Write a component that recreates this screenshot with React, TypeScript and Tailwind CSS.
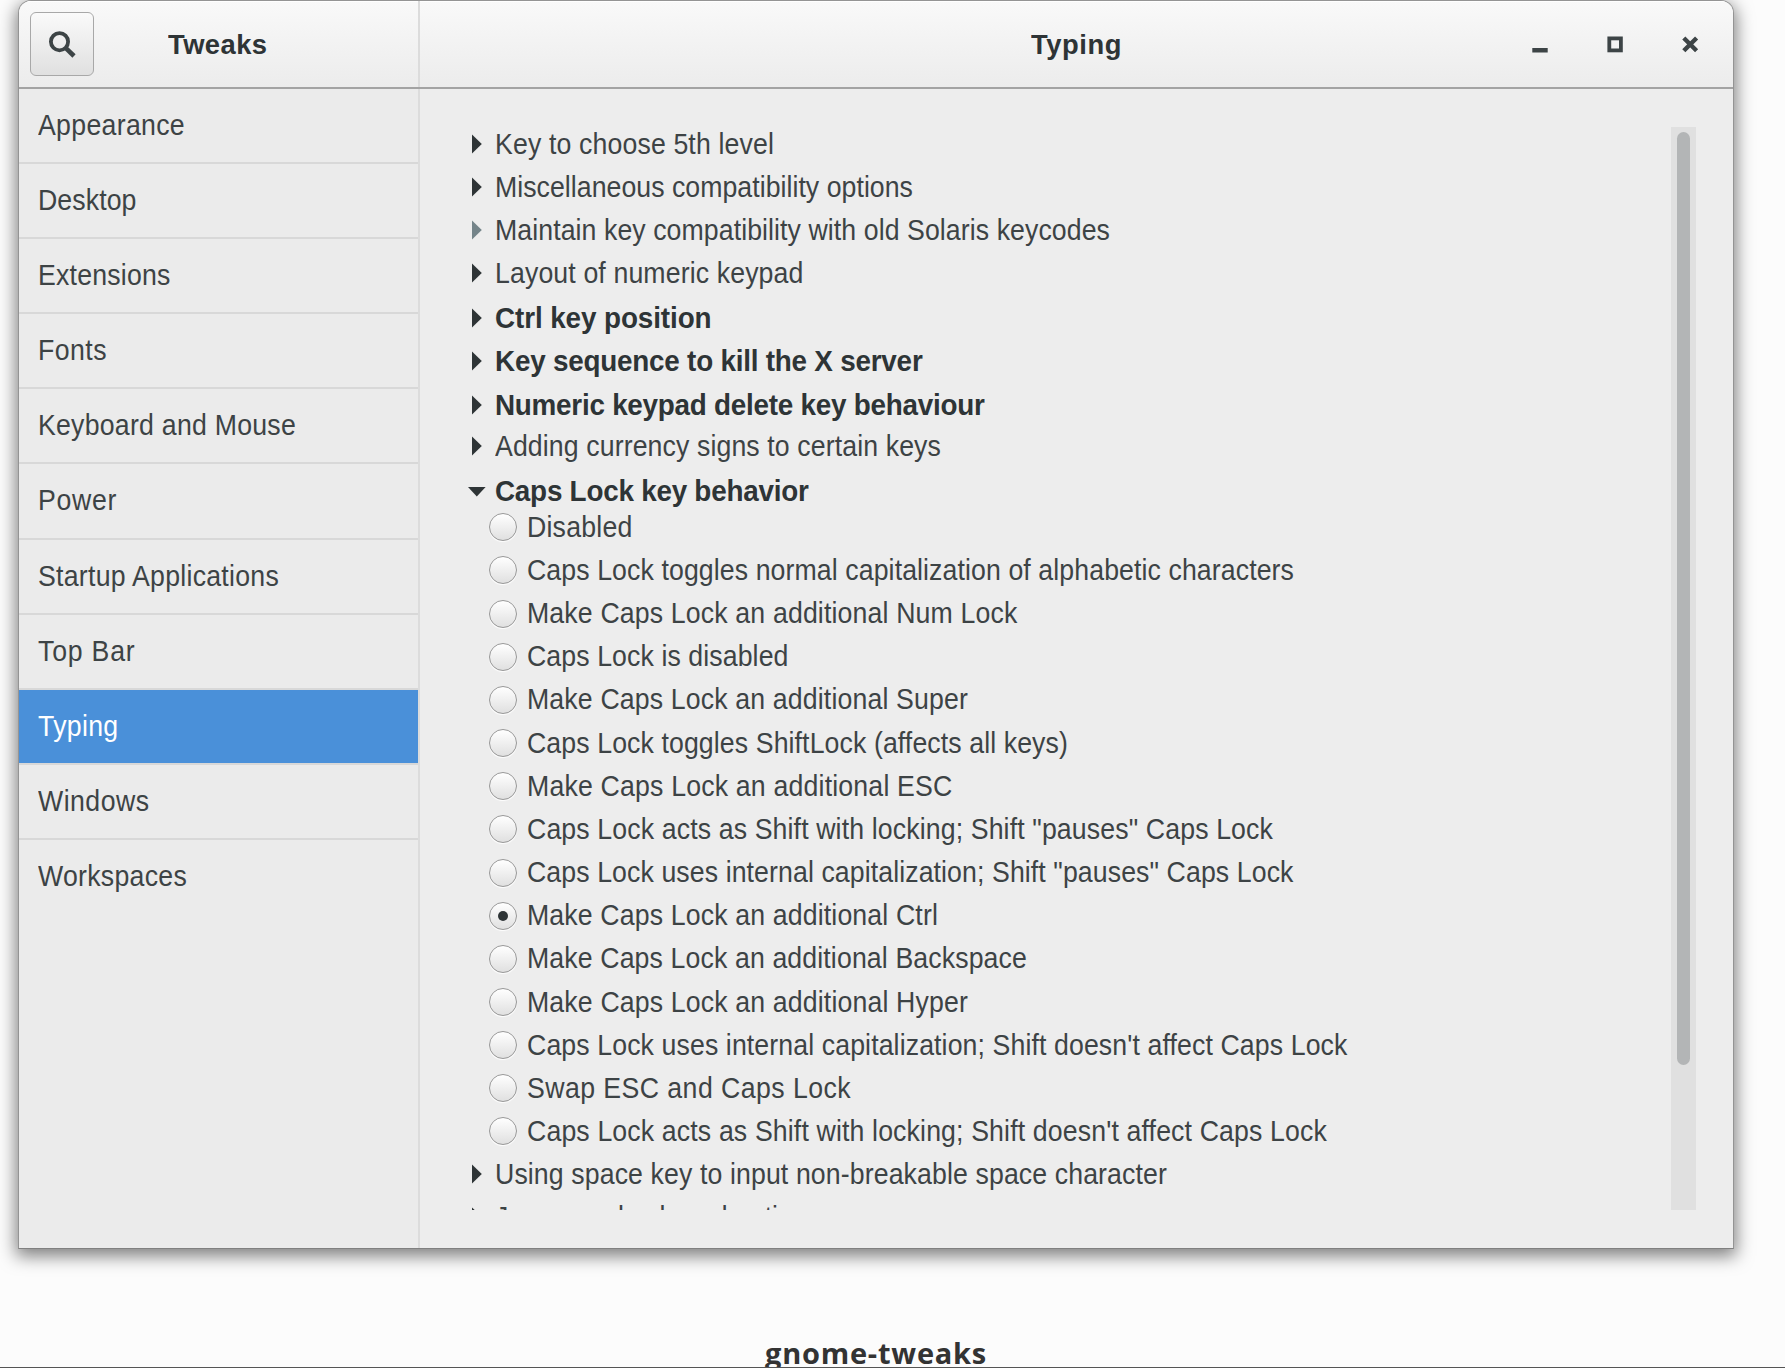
import { useLayoutEffect, useRef, useState } from "react";
import clsx from "clsx";

/** One line of text whose tracking is adjusted so that it fills `width` pixels. */
function Fit({ text, width, className }: { text: string; width: number; className?: string }) {
  const ref = useRef<HTMLSpanElement>(null);
  const [tracking, setTracking] = useState(0);
  useLayoutEffect(() => {
    const el = ref.current;
    if (el) {
      const drawn = el.getBoundingClientRect().width;
      const scale = drawn / el.offsetWidth;
      setTracking((width - drawn) / scale / text.length);
    }
  }, []);
  return (
    <span
      ref={ref}
      className={clsx("inline-block shrink-0 origin-left whitespace-pre", className)}
      style={{ letterSpacing: tracking }}
    >
      {text}
    </span>
  );
}

const sidebar: [string, number][] = [
  ["Appearance", 147],
  ["Desktop", 98.5],
  ["Extensions", 132.5],
  ["Fonts", 69],
  ["Keyboard and Mouse", 258],
  ["Power", 79],
  ["Startup Applications", 241],
  ["Top Bar", 97.5],
  ["Typing", 80.5],
  ["Windows", 111.5],
  ["Workspaces", 149],
];

type Group = { text: string; width: number; bold?: boolean; muted?: boolean; open?: boolean; shift?: string };

const groups: Group[] = [
  { text: "Key to choose 5th level", width: 279 },
  { text: "Miscellaneous compatibility options", width: 418 },
  { text: "Maintain key compatibility with old Solaris keycodes", width: 615, muted: true },
  { text: "Layout of numeric keypad", width: 308.5 },
  { text: "Ctrl key position", width: 216.5, bold: true, shift: "mt-[2px]" },
  { text: "Key sequence to kill the X server", width: 427.5, bold: true },
  { text: "Numeric keypad delete key behaviour", width: 489.5, bold: true },
  { text: "Adding currency signs to certain keys", width: 446, shift: "-mt-[1.5px]" },
  { text: "Caps Lock key behavior", width: 313.5, bold: true, open: true, shift: "mt-[1.8px]" },
];

const options: [string, number][] = [
  ["Disabled", 105.5],
  ["Caps Lock toggles normal capitalization of alphabetic characters", 767],
  ["Make Caps Lock an additional Num Lock", 490.5],
  ["Caps Lock is disabled", 261.5],
  ["Make Caps Lock an additional Super", 441],
  ["Caps Lock toggles ShiftLock (affects all keys)", 541],
  ["Make Caps Lock an additional ESC", 425.5],
  ['Caps Lock acts as Shift with locking; Shift "pauses" Caps Lock', 746],
  ['Caps Lock uses internal capitalization; Shift "pauses" Caps Lock', 766.5],
  ["Make Caps Lock an additional Ctrl", 411],
  ["Make Caps Lock an additional Backspace", 500],
  ["Make Caps Lock an additional Hyper", 441],
  ["Caps Lock uses internal capitalization; Shift doesn't affect Caps Lock", 820.5],
  ["Swap ESC and Caps Lock", 324],
  ["Caps Lock acts as Shift with locking; Shift doesn't affect Caps Lock", 800],
];
const selected = 9;

function GroupRow({ text, width, bold, muted, open, shift }: Group) {
  return (
    <div className={clsx("flex h-[43.17px] shrink-0 items-center", shift)}>
      <svg width="20" height="20" viewBox="0 0 20 20" className="mr-[8px] shrink-0">
        {open ? (
          <path d="M1 6H18.6L9.8 15.4Z" fill="#2e3436" />
        ) : (
          <path d="M5 0.4V19.4L14.8 9.9Z" fill={muted ? "#748489" : "#2e3436"} />
        )}
      </svg>
      <Fit
        text={text}
        width={width}
        className={bold ? "scale-x-[0.96] font-bold text-[#2e3436]" : "scale-x-[0.92] text-[#3d4345]"}
      />
    </div>
  );
}

export default function App() {
  return (
    <div className="flex h-[1368px] w-[1785px] flex-col overflow-hidden border-b border-[#555] bg-[#fcfcfc] font-['Liberation_Sans',sans-serif] text-[29px] leading-[32px]">
      <div className="ml-[18px] flex h-[1249px] w-[1716px] shrink-0 flex-col overflow-hidden rounded-t-[13px] border border-[#949494] border-b-[#808080] bg-[#ededed] shadow-[0_5px_17px_2px_rgba(0,0,0,0.5)]">
        <header className="flex h-[88px] shrink-0 border-b-2 border-[#a3a3a3] bg-linear-to-b from-[#f9f9f9] to-[#ececec] text-[28.5px] font-bold text-[#2e3436] shadow-[inset_0_1px_0_white]">
          <div className="flex w-[401px] shrink-0 border-r-2 border-[#dcdcdc] pt-[11px] pl-[11px]">
            <button className="flex size-[64px] shrink-0 items-center justify-center rounded-[6px] border-[1.5px] border-[#a8a8a8] bg-linear-to-b from-[#fafafa] to-[#e0e0e0]">
              <svg width="28" height="28" viewBox="0 0 28 28" fill="none" stroke="#3d4446">
                <circle cx="11.5" cy="11.7" r="8.6" strokeWidth="3.8" />
                <path d="M17.6 17.8L26 26" strokeWidth="4.6" />
              </svg>
            </button>
            <div className="ml-[74px] pt-[16px]">
              <Fit text="Tweaks" width={99.5} className="scale-x-[0.96]" />
            </div>
          </div>
          <div className="flex grow pt-[27px]">
            <div className="w-[1112px] shrink-0 pl-[611px]">
              <Fit text="Typing" width={91} className="scale-x-[0.96]" />
            </div>
            <svg width="168" height="20" viewBox="0 0 168 20" fill="none" stroke="#3d4446" className="mt-[6px]">
              <path d="M0.3 16.2H15.7" strokeWidth="4.4" />
              <rect x="77.3" y="4.4" width="11.6" height="12" strokeWidth="3.8" />
              <path d="M151.8 4L164.6 16.8M164.6 4L151.8 16.8" strokeWidth="4.4" />
            </svg>
          </div>
        </header>
        <div className="flex min-h-0 grow">
          <nav className="w-[401px] shrink-0 border-r-2 border-[#dcdcdc] bg-[#ebebeb] text-[#3d4345]">
            {sidebar.map(([text, width], i) => (
              <div
                key={text}
                className={clsx(
                  "flex h-[75.1px] pt-[20px] pl-[19px]",
                  i < 10 && "border-b-2 border-[#d8d8d8]",
                  i === 8 && "bg-[#4a90d9] text-white",
                )}
              >
                <Fit text={text} width={width} className="scale-x-[0.92]" />
              </div>
            ))}
          </nav>
          <main className="flex grow pt-[38px] pl-[47px]">
            <div className="h-[1083px] w-[1204px] shrink-0 overflow-hidden">
              <div className="-mt-[5px] flex flex-col">
                {groups.map((g) => (
                  <GroupRow key={g.text} {...g} />
                ))}
                <div className="-mt-[7.5px] flex flex-col pl-[22px]">
                  {options.map(([text, width], i) => (
                    <div key={text} className="flex h-[43.17px] items-center">
                      <div className="mt-[1px] mr-[10px] flex size-[28px] shrink-0 items-center justify-center rounded-full border-[1.5px] border-[#999] bg-linear-to-b from-white to-[#e0e0e0] shadow-[0_1px_1px_white]">
                        {i === selected && <div className="size-[10px] rounded-full bg-[#2e3436]" />}
                      </div>
                      <Fit text={text} width={width} className="scale-x-[0.92] text-[#3d4345]" />
                    </div>
                  ))}
                </div>
                <GroupRow text="Using space key to input non-breakable space character" width={672} />
                <GroupRow text="Japanese keyboard options" width={326} />
              </div>
            </div>
            <div className="h-[1083px] w-[25px] shrink-0 bg-[#e0e0e0] pt-[5px] pl-[6px]">
              <div className="h-[933px] w-[13px] rounded-full bg-[#b3b5b6]" />
            </div>
          </main>
        </div>
      </div>
      <div className="mt-[82px] ml-[765px] font-['Open_Sans',sans-serif] text-[29px] leading-[44px] font-bold text-[#333]">
        <Fit text="gnome-tweaks" width={222} />
      </div>
    </div>
  );
}
